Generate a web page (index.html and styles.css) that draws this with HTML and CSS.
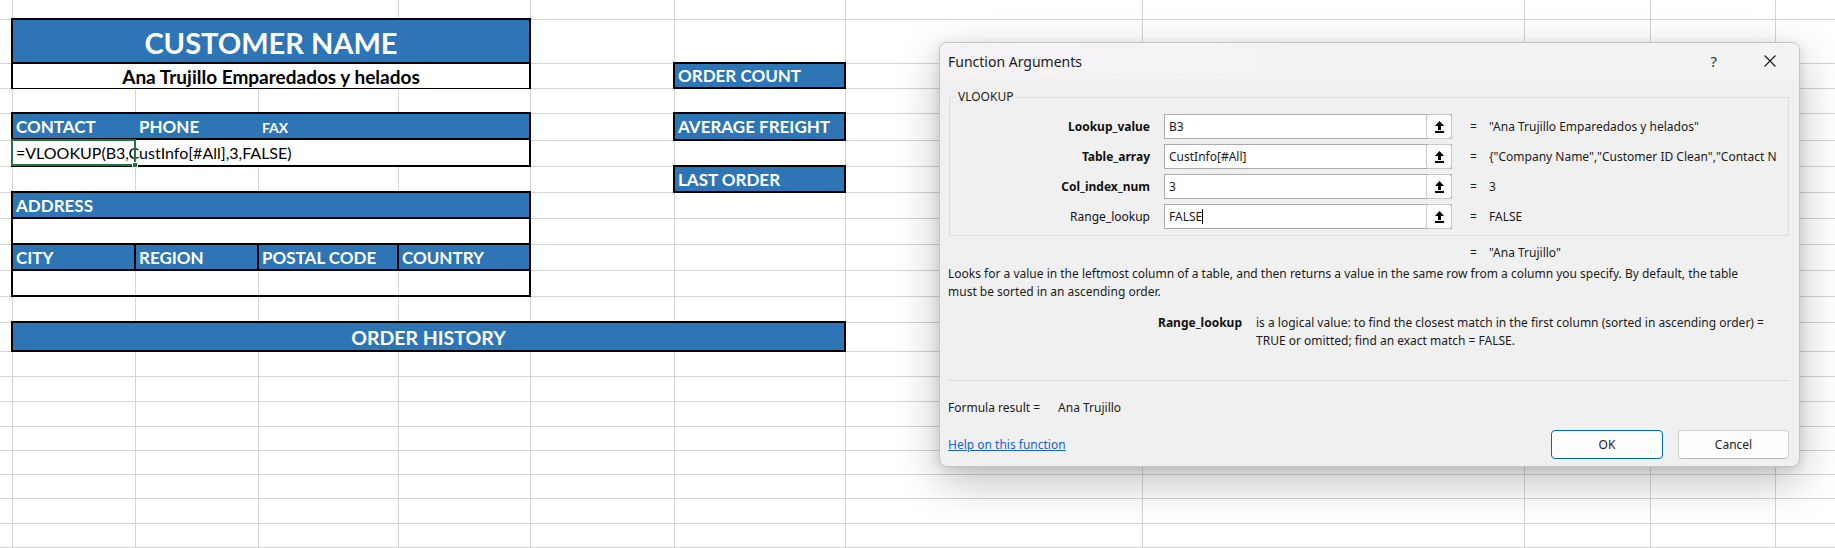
FILE: index.html
```html
<!DOCTYPE html>
<html lang="en">
<head>
<meta charset="utf-8">
<title>Customer sheet - Function Arguments</title>
<link rel="stylesheet" href="styles.css">
</head>
<body>
<div class="sheet">
  <div class="blk cust">
    <div class="cust-title">CUSTOMER NAME</div>
    <div class="cust-value">Ana Trujillo Emparedados y helados</div>
  </div>

  <div class="blk stat stat-count">ORDER COUNT</div>
  <div class="blk stat stat-freight">AVERAGE FREIGHT</div>
  <div class="blk stat stat-last">LAST ORDER</div>

  <div class="blk contact">
    <div class="hdr cols4">
      <span class="hcell">CONTACT</span>
      <span class="hcell">PHONE</span>
      <span class="hcell small">FAX</span>
      <span class="hcell"></span>
    </div>
    <div class="formula-row">
      <span class="formula">=VLOOKUP(B3,CustInfo[#All],3,FALSE)</span>
      <div class="sel"><span class="handle"></span></div>
    </div>
  </div>

  <div class="blk address">
    <div class="hdr full"><span class="hcell">ADDRESS</span></div>
    <div class="addr-value"></div>
    <div class="hdr cols4 split">
      <span class="hcell">CITY</span>
      <span class="hcell">REGION</span>
      <span class="hcell">POSTAL CODE</span>
      <span class="hcell">COUNTRY</span>
    </div>
    <div class="city-value"></div>
  </div>

  <div class="blk history">ORDER HISTORY</div>
</div>

<div class="dialog">
  <div class="titlebar">
    <span class="title">Function Arguments</span>
    <span class="qmark">?</span>
    <svg class="close" width="12" height="12" viewBox="0 0 12 12"><path d="M0.5 0.5L11.5 11.5M11.5 0.5L0.5 11.5" stroke="#1a1a1a" stroke-width="1.1" fill="none"/></svg>
  </div>
  <div class="dbody">
    <fieldset class="group">
      <legend>VLOOKUP</legend>
      <div class="arg">
        <span class="arg-label b">Lookup_value</span>
        <div class="arg-input"><span class="arg-text">B3</span><span class="collapse"><svg width="9" height="12" viewBox="0 0 9 12"><path d="M4.5 0L9 5H6V9H3V5H0Z" fill="#000"/><rect x="0" y="10" width="9" height="2" fill="#000"/></svg></span></div>
        <span class="eq">=</span>
        <span class="arg-val">"Ana Trujillo Emparedados y helados"</span>
      </div>
      <div class="arg">
        <span class="arg-label b">Table_array</span>
        <div class="arg-input"><span class="arg-text">CustInfo[#All]</span><span class="collapse"><svg width="9" height="12" viewBox="0 0 9 12"><path d="M4.5 0L9 5H6V9H3V5H0Z" fill="#000"/><rect x="0" y="10" width="9" height="2" fill="#000"/></svg></span></div>
        <span class="eq">=</span>
        <span class="arg-val">{"Company Name","Customer ID Clean","Contact Name","Contact Title","Address","City"}</span>
      </div>
      <div class="arg">
        <span class="arg-label b">Col_index_num</span>
        <div class="arg-input"><span class="arg-text">3</span><span class="collapse"><svg width="9" height="12" viewBox="0 0 9 12"><path d="M4.5 0L9 5H6V9H3V5H0Z" fill="#000"/><rect x="0" y="10" width="9" height="2" fill="#000"/></svg></span></div>
        <span class="eq">=</span>
        <span class="arg-val">3</span>
      </div>
      <div class="arg">
        <span class="arg-label">Range_lookup</span>
        <div class="arg-input"><span class="arg-text">FALSE<span class="caret"></span></span><span class="collapse"><svg width="9" height="12" viewBox="0 0 9 12"><path d="M4.5 0L9 5H6V9H3V5H0Z" fill="#000"/><rect x="0" y="10" width="9" height="2" fill="#000"/></svg></span></div>
        <span class="eq">=</span>
        <span class="arg-val">FALSE</span>
      </div>
    </fieldset>

    <div class="result-row"><span class="eq">=</span><span class="arg-val">"Ana Trujillo"</span></div>

    <p class="desc">Looks for a value in the leftmost column of a table, and then returns a value in the same row from a column you specify. By default, the table<br>must be sorted in an ascending order.</p>

    <div class="argdesc">
      <span class="argdesc-label">Range_lookup</span>
      <span class="argdesc-text">is a logical value: to find the closest match in the first column (sorted in ascending order) =<br>TRUE or omitted; find an exact match = FALSE.</span>
    </div>

    <div class="sep"></div>

    <div class="fres"><span>Formula result =</span><span class="fres-val">Ana Trujillo</span></div>

    <div class="footer">
      <a class="helplink" href="#">Help on this function</a>
      <button class="btn ok" type="button">OK</button>
      <button class="btn" type="button">Cancel</button>
    </div>
  </div>
</div>
</body>
</html>
```

FILE: styles.css
```css
* { box-sizing: border-box; }
html, body { margin: 0; padding: 0; }
body {
  width: 1835px;
  height: 548px;
  overflow: hidden;
  background: #fff;
  position: relative;
  font-family: Lato, "Liberation Sans", sans-serif;
}

/* ---------- spreadsheet ---------- */
.sheet {
  display: grid;
  grid-template-columns: 12px 123px 123px 140px 132px 144px 171px 297px 382px 126px 125px 1fr;
  grid-template-rows: 19px 44px 25px 25px 27px 26px 26px 26px 26px 26px 26px 26px 29px 25px 25px 25px 24px 24px 24px 25px 24px 1fr;
  height: 548px;
  --g: linear-gradient(#d4d4d4, #d4d4d4);
  background:
    var(--g) 12px 0 / 1px 100% no-repeat,
    var(--g) 135px 19px / 1px 100% no-repeat,
    var(--g) 258px 19px / 1px 100% no-repeat,
    var(--g) 398px 0 / 1px 100% no-repeat,
    var(--g) 530px 0 / 1px 100% no-repeat,
    var(--g) 674px 0 / 1px 100% no-repeat,
    var(--g) 845px 0 / 1px 100% no-repeat,
    var(--g) 1142px 0 / 1px 100% no-repeat,
    var(--g) 1524px 0 / 1px 100% no-repeat,
    var(--g) 1650px 0 / 1px 100% no-repeat,
    var(--g) 1775px 0 / 1px 100% no-repeat,
    var(--g) 0 19px / 100% 1px no-repeat,
    var(--g) 0 63px / 100% 1px no-repeat,
    var(--g) 0 88px / 100% 1px no-repeat,
    var(--g) 0 113px / 100% 1px no-repeat,
    var(--g) 0 140px / 100% 1px no-repeat,
    var(--g) 0 166px / 100% 1px no-repeat,
    var(--g) 0 192px / 100% 1px no-repeat,
    var(--g) 0 218px / 100% 1px no-repeat,
    var(--g) 0 244px / 100% 1px no-repeat,
    var(--g) 0 270px / 100% 1px no-repeat,
    var(--g) 0 296px / 100% 1px no-repeat,
    var(--g) 0 322px / 100% 1px no-repeat,
    var(--g) 0 351px / 100% 1px no-repeat,
    var(--g) 0 376px / 100% 1px no-repeat,
    var(--g) 0 401px / 100% 1px no-repeat,
    var(--g) 0 426px / 100% 1px no-repeat,
    var(--g) 0 450px / 100% 1px no-repeat,
    var(--g) 0 474px / 100% 1px no-repeat,
    var(--g) 0 498px / 100% 1px no-repeat,
    var(--g) 0 523px / 100% 1px no-repeat,
    var(--g) 0 547px / 100% 1px no-repeat,
    #fff;
}

.blk {
  margin: -1px;
  border: 2px solid #000;
  color: #fff;
  font-weight: 700;
}

.cust { grid-column: 2 / 6; grid-row: 2 / 4; display: flex; flex-direction: column; }
.cust-title {
  flex: 0 0 44px;
  background: #2e75b6;
  border-bottom: 2px solid #000;
  display: flex; align-items: center; justify-content: center;
  font-size: 29px;
  padding-top: 2px;
}
.cust-value {
  flex: 1;
  background: #fff;
  color: #000;
  display: flex; align-items: center; justify-content: center;
  font-size: 19px;
  padding-top: 1px;
}

.stat {
  grid-column: 7;
  background: #2e75b6;
  display: flex; align-items: center;
  padding-left: 3px;
  font-size: 17px;
}
.stat-count { grid-row: 3; }
.stat-freight { grid-row: 5; }
.stat-last { grid-row: 7; }

.contact { grid-column: 2 / 6; grid-row: 5 / 7; display: flex; flex-direction: column; }
.address { grid-column: 2 / 6; grid-row: 8 / 12; display: flex; flex-direction: column; }

.hdr {
  flex: 0 0 26px;
  background: #2e75b6;
  border-bottom: 2px solid #000;
  font-size: 17px;
}
.hdr.cols4 {
  display: grid;
  grid-template-columns: 123px 123px 140px 1fr;
}
.hdr.split {
  grid-template-columns: 121px 121px 138px 1fr;
  gap: 2px;
  background: #000;
}
.hdr.split .hcell { background: #2e75b6; }
.hdr.full { display: flex; }
.hcell {
  display: flex; align-items: center;
  padding-left: 3px;
  padding-top: 1px;
}
.hcell.small { font-size: 14px; padding-top: 3px; }

.formula-row {
  flex: 1;
  position: relative;
  background: #fff;
  color: #000;
  font-weight: 400;
  display: flex; align-items: center;
  padding-left: 3px;
  font-size: 16px;
}
.sel {
  position: absolute;
  left: -2px; top: -1px;
  width: 125px; height: 27px;
  border: 2px solid #217346;
}
.handle {
  position: absolute;
  right: -4px; bottom: -4px;
  width: 6px; height: 6px;
  background: #217346;
  border: 1px solid #fff;
}

.addr-value { flex: 0 0 26px; background: #fff; border-bottom: 2px solid #000; }
.city-value { flex: 1; }

.history {
  grid-column: 2 / 8; grid-row: 13;
  background: #2e75b6;
  display: flex; align-items: center; justify-content: center;
  font-size: 19.5px;
  padding-top: 1px;
}

/* ---------- dialog ---------- */
.dialog {
  position: absolute;
  left: 939px; top: 42px;
  width: 861px; height: 425px;
  border: 1px solid #c4c4c4;
  border-radius: 8px;
  background: #f0f0f0;
  box-shadow: 0 14px 44px rgba(0,0,0,0.26), 0 2px 10px rgba(0,0,0,0.10);
  overflow: hidden;
  font-family: "Noto Sans", "Open Sans", sans-serif;
  font-size: 12px;
  color: #1b1b1b;
  display: flex; flex-direction: column;
}
.titlebar {
  flex: 0 0 36px;
  background: linear-gradient(90deg, #f5f2f5, #f3f3f4 40%, #f3f3f3);
  display: flex; align-items: center;
  padding-left: 8px;
  padding-right: 23px;
}
.title { font-size: 14px; color: #1a1a1a; }
.qmark { margin-left: auto; font-size: 15px; color: #333; margin-right: 47px; }
.close { display: block; }

.dbody {
  flex: 1;
  padding: 0 10px 0 8px;
  display: flex; flex-direction: column;
}
.group {
  margin: 10px 0 0 1px;
  padding: 9px 0 6px 0;
  border: 1px solid #dcdcdc;
  display: flex; flex-direction: column; gap: 5px;
  min-width: 0;
}
.group legend {
  margin-left: 5px;
  padding: 0 3px;
  line-height: 16px;
  color: #222;
}
.arg { display: flex; align-items: center; height: 25px; }
.arg-label { flex: 0 0 200px; text-align: right; color: #111; }
.b { font-weight: 700; }
.arg-input {
  flex: 0 0 288px;
  height: 25px;
  margin-left: 14px;
  background: #fff;
  border: 1px solid #ababab;
  display: flex; align-items: center;
  padding-left: 4px;
}
.arg-text { flex: 1; white-space: nowrap; display: flex; align-items: center; }
.caret { display: inline-block; width: 1px; height: 15px; background: #000; }
.collapse {
  flex: 0 0 26px;
  align-self: stretch;
  margin: -1px -1px -1px 0;
  border: 1px solid #c9c9c9;
  border-radius: 3px;
  background: #fdfdfd;
  display: flex; align-items: center; justify-content: center;
}
.collapse svg { display: block; }
.eq { flex: 0 0 19px; margin-left: 18px; }
.arg-val { flex: 0 0 288px; white-space: nowrap; overflow: hidden; }

.result-row { display: flex; margin-top: 8px; line-height: 18px; padding-left: 522px; }
.result-row .eq { margin-left: 0; }

.desc { margin: 3px 0 0; line-height: 18px; white-space: nowrap; }

.argdesc { display: flex; margin-top: 13px; line-height: 17.5px; }
.argdesc-label { flex: 0 0 294px; text-align: right; font-weight: 700; color: #111; }
.argdesc-text { margin-left: 14px; white-space: nowrap; }

.sep { height: 1px; background: #dadada; margin-top: 31px; }

.fres { margin-top: 18px; line-height: 18px; display: flex; }
.fres-val { margin-left: 18px; }

.footer { display: flex; align-items: center; margin-top: 13px; }
.helplink { color: #1a63c9; text-decoration: underline; }
.btn {
  font: inherit;
  color: #1b1b1b;
  height: 29px;
  width: 111px;
  background: #fdfdfd;
  border: 1px solid #d0d0d0;
  border-bottom-color: #bcbcbc;
  border-radius: 4px;
  margin-left: 15px;
  padding: 0;
}
.btn.ok { margin-left: auto; width: 112px; border: 1.5px solid #0067c0; }
```
